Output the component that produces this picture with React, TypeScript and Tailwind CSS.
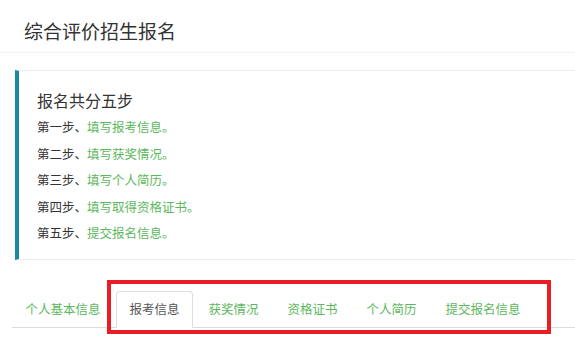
import React from "react";

const steps = [
  { label: "第一步、", text: "填写报考信息。" },
  { label: "第二步、", text: "填写获奖情况。" },
  { label: "第三步、", text: "填写个人简历。" },
  { label: "第四步、", text: "填写取得资格证书。" },
  { label: "第五步、", text: "提交报名信息。" },
];

const tabs = ["个人基本信息", "报考信息", "获奖情况", "资格证书", "个人简历", "提交报名信息"];

function App() {
  const active = 1;
  return (
    <div
      className="relative w-[575px] h-[348px] overflow-hidden bg-white text-[#333]"
      style={{ fontFamily: '"Microsoft YaHei", "Noto Sans CJK SC", "Liberation Sans", sans-serif' }}
    >
      <div className="h-[53px] border-b border-[#f0f0f0] pl-[24px] pt-[17px]">
        <h1 className="text-[19px] leading-[28px] font-normal">综合评价招生报名</h1>
      </div>

      <div className="ml-[15px] mt-[17px] h-[190px] border-l-[4px] border-l-[#1a8aa3] border-y border-y-[#eeeeee] pl-[18px] pt-[17px]">
        <h2 className="text-[16px] leading-[24px] text-[#333]">报名共分五步</h2>
        <ul className="mt-[2px]">
          {steps.map((s) => (
            <li key={s.label} className="text-[12.5px] leading-[26.5px] text-[#333]">
              {s.label}
              <span className="text-[#5cb85c]">{s.text}</span>
            </li>
          ))}
        </ul>
      </div>

      <div className="ml-[12px] mt-[31px] flex border-b border-[#dddddd]">
        {tabs.map((t, i) => (
          <div
            key={t}
            className={
              i === active
                ? "-mb-px mr-[2px] h-[37px] px-[12.5px] flex items-center text-[12.5px] text-[#555] bg-white border border-[#dddddd] border-b-white rounded-t-[4px]"
                : "-mb-px mr-[2px] h-[37px] px-[12.5px] flex items-center text-[12.5px] text-[#5cb85c] border border-transparent"
            }
          >
            {t}
          </div>
        ))}
      </div>

      <div className="absolute left-[107px] top-[280px] w-[444px] h-[54px] border-[4px] border-[#ea1c24]" />
    </div>
  );
}

export default App;
